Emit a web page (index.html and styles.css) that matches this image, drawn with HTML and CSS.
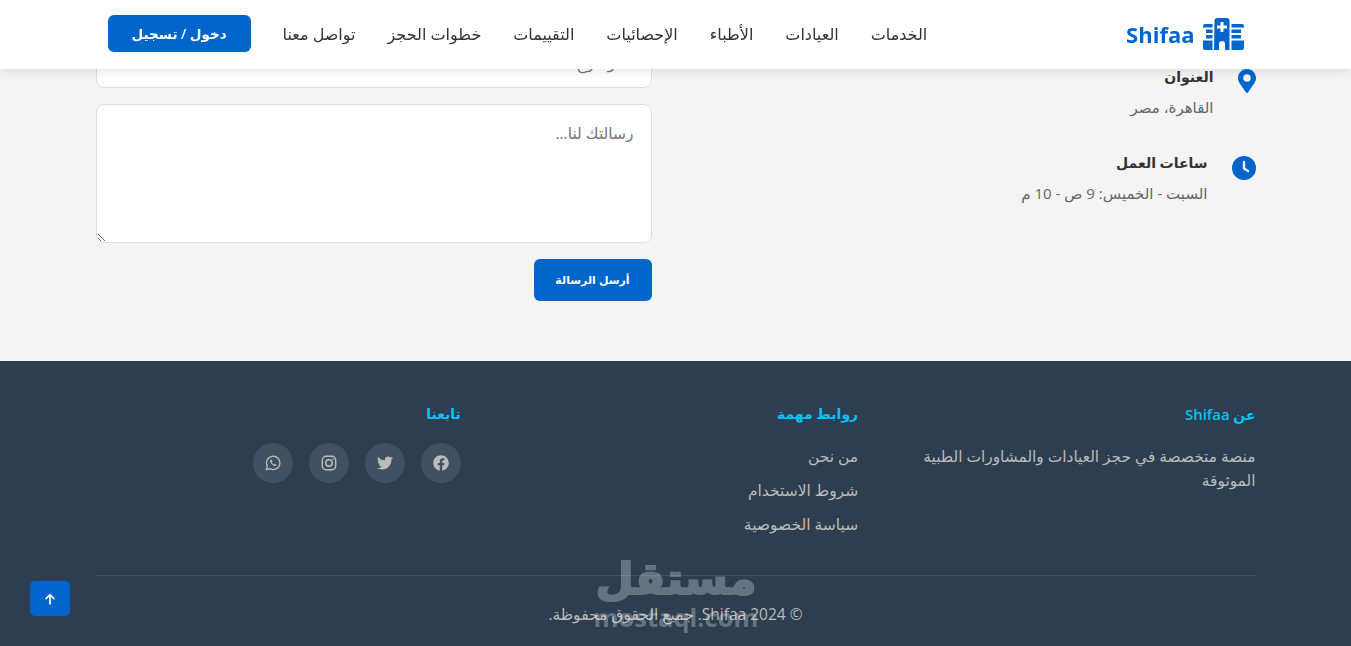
FILE: index.html
```html
<!DOCTYPE html>
<html lang="ar" dir="rtl">
<head>
  <meta charset="UTF-8" />
  <meta name="viewport" content="width=device-width, initial-scale=1.0" />
  <title>Shifaa</title>
  <link rel="stylesheet" href="styles.css">
</head>
<body>
  <header>
    <div class="nav-bar">
      <div class="logo">
        <svg class="logo-icon" viewBox="0 0 41 32" fill="#0066cc">
          <path fill-rule="evenodd" d="M11.500 3a3 3 0 0 1 3-3h9a3 3 0 0 1 3 3v29h-4.500v-6a3 3 0 0 0-6 0v6h-5zM17.500 4v3.500H14v3h3.500V14h3v-3.500H24v-3h-3.500V4z"/>
          <path d="M2 6h7.500v3.500H0V8a2 2 0 0 1 2-2zM3 11.500h6.500V15H3zM3 17h6.500v3.500H3zM0 22.500h9.500V32H2a2 2 0 0 1-2-2z"/>
          <path d="M28.500 6H39a2 2 0 0 1 2 2v1.500H28.500zM28.500 11.500H38V15h-9.500zM28.500 17H38v3.500h-9.500zM28.500 22.500H41V30a2 2 0 0 1-2 2H28.500z"/>
        </svg>
        <span>Shifaa</span>
      </div>
      <nav>
        <a href="#">الخدمات</a>
        <a href="#">العيادات</a>
        <a href="#">الأطباء</a>
        <a href="#">الإحصائيات</a>
        <a href="#">التقييمات</a>
        <a href="#">خطوات الحجز</a>
        <a href="#">تواصل معنا</a>
        <button class="login-btn">دخول / تسجيل</button>
      </nav>
    </div>
  </header>

  <main class="contact">
    <div class="contact-info">
      <div class="info-item">
        <svg class="info-icon pin" viewBox="0 0 384 512" fill="#0066cc"><path d="M172 502C27 291 0 269 0 192 0 86 86 0 192 0s192 86 192 192c0 77-27 99-172 310-10 14-30 14-40 0zm20-230a80 80 0 1 0 0-160 80 80 0 0 0 0 160z"/></svg>
        <div>
          <h4>العنوان</h4>
          <p>القاهرة، مصر</p>
        </div>
      </div>
      <div class="info-item">
        <svg class="info-icon clock" viewBox="0 0 24 24"><circle cx="12" cy="12" r="12" fill="#0066cc"/><path d="M12 6v6.500l4 2.500" fill="none" stroke="#f4f4f4" stroke-width="2.400" stroke-linecap="round" stroke-linejoin="round"/></svg>
        <div>
          <h4>ساعات العمل</h4>
          <p>السبت - الخميس: 9 ص - 10 م</p>
        </div>
      </div>
    </div>
    <form class="contact-form">
      <input type="text" placeholder="الموضوع">
      <textarea placeholder="رسالتك لنا..."></textarea>
      <button type="button" class="send-btn">أرسل الرسالة</button>
    </form>
  </main>

  <footer>
    <div class="footer-grid">
      <div>
        <h3>عن <span class="brand">Shifaa</span></h3>
        <p>منصة متخصصة في حجز العيادات والمشاورات الطبية الموثوقة</p>
      </div>
      <div>
        <h3>روابط مهمة</h3>
        <ul>
          <li><a href="#">من نحن</a></li>
          <li><a href="#">شروط الاستخدام</a></li>
          <li><a href="#">سياسة الخصوصية</a></li>
        </ul>
      </div>
      <div>
        <h3>تابعنا</h3>
        <div class="socials">
          <a href="#"><svg viewBox="0 0 512 512" fill="#bbb"><path d="M504 256C504 119 393 8 256 8S8 119 8 256c0 123.780 90.690 226.380 209.250 245V327.690h-63V256h63v-54.640c0-62.150 37-96.480 93.670-96.480 27.140 0 55.520 4.840 55.520 4.840v61h-31.280c-30.800 0-40.410 19.120-40.410 38.730V256h68.780l-11 71.690h-57.780V501C413.310 482.380 504 379.780 504 256z"/></svg></a>
          <a href="#"><svg viewBox="0 0 512 512" fill="#bbb"><path d="M459.370 151.716c.325 4.548.325 9.097.325 13.645 0 138.720-105.583 298.558-298.558 298.558-59.452 0-114.680-17.219-161.137-47.106 8.447.974 16.568 1.299 25.340 1.299 49.055 0 94.213-16.568 130.274-44.832-46.132-.975-84.792-31.188-98.112-72.772 6.498.974 12.995 1.624 19.818 1.624 9.421 0 18.843-1.300 27.614-3.573-48.081-9.747-84.143-51.980-84.143-102.985v-1.299c13.969 7.797 30.214 12.670 47.431 13.319-28.264-18.843-46.781-51.005-46.781-87.391 0-19.492 5.197-37.360 14.294-52.954 51.655 63.675 129.300 105.258 216.365 109.807-1.624-7.797-2.599-15.918-2.599-24.040 0-57.828 46.782-104.934 104.934-104.934 30.213 0 57.502 12.670 76.670 33.137 23.715-4.548 46.456-13.645 66.599-25.340-7.798 23.715-23.490 43.532-44.157 55.808 21.117-2.274 40.934-8.122 59.452-15.919-14.294 20.792-32.161 39.308-52.628 54.253z"/></svg></a>
          <a href="#"><svg viewBox="0 0 24 24" fill="none" stroke="#bbb" stroke-width="2.200"><rect x="2" y="2" width="20" height="20" rx="5.500"/><circle cx="12" cy="12" r="4.800"/><circle cx="18" cy="6" r="1.300" fill="#bbb" stroke="none"/></svg></a>
          <a href="#"><svg viewBox="0 0 24 24" fill="none" stroke="#bbb" stroke-width="2"><path d="M2 22l1.500-5.400A10 10 0 1 1 7.400 20.600z" stroke-linejoin="round"/><path d="M8.600 7c-1.200 1-1.200 2.800.2 4.900 1.500 2.300 3.800 4.300 6 4.500 1.200.1 2.200-.7 2.400-1.900l-2.300-1.200-1 1.100c-1.300-.4-3-2-3.700-3.500l.9-1.100L10 7.200z" fill="#bbb" stroke="none"/></svg></a>
        </div>
      </div>
    </div>
    <div class="copyright">© 2024 Shifaa. جميع الحقوق محفوظة.</div>
  </footer>

  <a href="#" class="to-top">
    <svg viewBox="0 0 14 14" fill="none" stroke="#fff" stroke-width="2" stroke-linecap="round" stroke-linejoin="round"><path d="M7 12.500V2M2.500 6.500L7 2l4.500 4.500"/></svg>
  </a>

  <div class="watermark">
    <div class="wm-ar">مستقل</div>
    <div class="wm-en">mostaql.com</div>
  </div>
</body>
</html>
```

FILE: styles.css
```css
* {
  box-sizing: border-box;
}

html, body {
  height: 646px;
  overflow: hidden;
}

body {
  margin: 0;
  font-family: 'Open Sans', 'Noto Sans', 'DejaVu Sans', sans-serif;
  background: #f4f4f4;
  color: #333;
}

header {
  position: fixed;
  top: 0;
  left: 0;
  right: 0;
  height: 69px;
  background: #fff;
  box-shadow: 0 2px 10px rgba(0, 0, 0, 0.1);
  z-index: 5;
}

.nav-bar {
  width: 1160px;
  height: 67px;
  margin: 0 auto;
  padding: 0 12px;
  display: flex;
  justify-content: space-between;
  align-items: center;
}

.logo {
  display: flex;
  align-items: center;
  gap: 8px;
  font-size: 22px;
  font-weight: 700;
  color: #0066cc;
}

.logo-icon {
  width: 41px;
  height: 32px;
}

nav {
  display: flex;
  align-items: center;
  gap: 32px;
}

nav a {
  color: #333;
  text-decoration: none;
  font-size: 16px;
  font-weight: 500;
}

.login-btn {
  width: 143px;
  height: 37px;
  border: 0;
  border-radius: 6px;
  background: #0066cc;
  color: #fff;
  font-family: inherit;
  font-size: 13.500px;
  font-weight: 600;
}

.contact {
  width: 1160px;
  height: 361px;
  margin: 0 auto;
  padding-top: 38px;
  display: grid;
  grid-template-columns: 1fr 1fr;
  gap: 48px;
}

.contact-info {
  padding-top: 28px;
}

.info-item {
  display: flex;
  gap: 24px;
  height: 86px;
}

.info-icon {
  flex: none;
}

.pin {
  width: 18px;
  height: 24px;
  margin-top: 3px;
}

.clock {
  width: 24px;
  height: 24px;
  margin-top: 4px;
}

.info-item h4 {
  margin: 0 0 8px;
  font-size: 14px;
  line-height: 22px;
  font-weight: 600;
  color: #333;
}

.info-item p {
  margin: 0;
  font-size: 15px;
  line-height: 22px;
  color: #666;
}

.contact-form {
  display: flex;
  flex-direction: column;
  align-items: flex-start;
  gap: 16px;
}

.contact-form input,
.contact-form textarea {
  width: 100%;
  padding: 17px 17px;
  border: 1px solid #ddd;
  border-radius: 8px;
  background: #fff;
  font-family: inherit;
  font-size: 15.500px;
}

.contact-form input {
  height: 50px;
}

.contact-form textarea {
  height: 139px;
}

.send-btn {
  width: 118px;
  height: 42px;
  border: 0;
  border-radius: 6px;
  background: #0066cc;
  color: #fff;
  font-family: 'Liberation Sans', 'DejaVu Sans', sans-serif;
  font-size: 11px;
  font-weight: 700;
}

footer {
  height: 285px;
  background: #2c3e50;
  color: #bbb;
  padding-top: 42px;
}

.footer-grid {
  width: 1160px;
  height: 172px;
  margin: 0 auto;
  display: grid;
  grid-template-columns: repeat(3, 1fr);
  gap: 32px;
}

.footer-grid h3 {
  margin: 0 0 19px;
  font-size: 14px;
  line-height: 22px;
  font-weight: 600;
  color: #00c4ff;
}

.footer-grid h3 .brand {
  font-size: 15px;
}

.footer-grid p {
  margin: 0;
  font-size: 15.400px;
  line-height: 24px;
}

.footer-grid ul {
  margin: 0;
  padding: 0;
  list-style: none;
}

.footer-grid li {
  height: 34px;
  font-size: 15.500px;
  line-height: 24px;
}

.footer-grid li a {
  color: #bbb;
  text-decoration: none;
}

.socials {
  display: flex;
  gap: 16px;
  margin-top: -1px;
}

.socials a {
  width: 40px;
  height: 40px;
  border-radius: 50%;
  background: rgba(255, 255, 255, 0.1);
  display: flex;
  align-items: center;
  justify-content: center;
}

.socials svg {
  width: 16px;
  height: 16px;
}

.copyright {
  width: 1160px;
  margin: 0 auto;
  padding-top: 27px;
  border-top: 1px solid rgba(255, 255, 255, 0.1);
  text-align: center;
  font-size: 15.500px;
  line-height: 22px;
}

.to-top {
  position: fixed;
  left: 30px;
  bottom: 30px;
  width: 40px;
  height: 35px;
  border-radius: 5px;
  background: #0066cc;
  display: flex;
  align-items: center;
  justify-content: center;
}

.to-top svg {
  width: 12px;
  height: 12px;
}

.watermark {
  position: fixed;
  left: 590px;
  top: 547px;
  width: 172px;
  text-align: center;
  color: #fff;
  opacity: 0.28;
  font-weight: 700;
  pointer-events: none;
  z-index: 6;
}

.wm-ar {
  font-size: 44px;
  line-height: 60px;
  -webkit-text-stroke: 2px #fff;
}

.wm-en {
  font-size: 25.500px;
  line-height: 24px;
  direction: ltr;
  margin-top: -2px;
}
```
